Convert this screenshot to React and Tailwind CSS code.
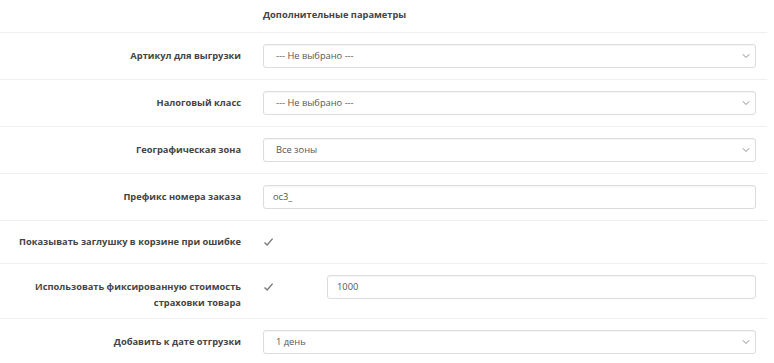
import React from "react";

const Chevron = () => (
  <svg width="8" height="5" viewBox="0 0 8 5" className="absolute right-[5px] top-1/2 -translate-y-1/2">
    <path d="M0.8 0.8 L4 4 L7.2 0.8" fill="none" stroke="#8a8a8a" strokeWidth="1" />
  </svg>
);

const Check = () => (
  <svg width="11" height="10" viewBox="0 0 11 10">
    <path d="M1.5 5.4 L4.2 8 L9.6 1.6" fill="none" stroke="#7a7a7a" strokeWidth="1.4" />
  </svg>
);

const Select = ({ value }) => (
  <div className="relative h-[24px] w-[493px] rounded-[3px] border border-[#dcdcdc] bg-white shadow-[inset_0_1px_1px_rgba(0,0,0,0.04)] flex items-center pl-[12px] text-[9.3px] text-[#555]">
    {value}
    <Chevron />
  </div>
);

const Input = ({ value, w = "w-[493px]" }) => (
  <div className={`h-[24px] ${w} rounded-[3px] border border-[#dcdcdc] bg-white shadow-[inset_0_1px_1px_rgba(0,0,0,0.04)] flex items-center pl-[9px] text-[9.3px] text-[#555]`}>
    {value}
  </div>
);

const Row = ({ label, children }) => (
  <div className="flex items-center border-t border-[#f0f0f0] py-[11px]">
    <div className="w-[241px] text-right font-bold text-[9.3px] leading-[16px] text-[#444]">{label}</div>
    <div className="ml-[22px]">{children}</div>
  </div>
);

export default function App() {
  return (
    <div className="w-[774px] h-[363px] overflow-hidden bg-white" style={{ fontFamily: '"Open Sans", "Noto Sans", sans-serif' }}>
      <div className="w-[767px]">
        <div className="h-[32px] flex items-center pl-[263px] pb-[2px] font-bold text-[9.3px] text-[#444]">
          Дополнительные параметры
        </div>
        <Row label="Артикул для выгрузки"><Select value="--- Не выбрано ---" /></Row>
        <Row label="Налоговый класс"><Select value="--- Не выбрано ---" /></Row>
        <Row label="Географическая зона"><Select value="Все зоны" /></Row>
        <Row label="Префикс номера заказа"><Input value="oc3_" /></Row>
        <div className="flex items-center border-t border-[#f0f0f0] h-[43px]">
          <div className="w-[241px] text-right font-bold text-[9.3px] leading-[20px] text-[#444] whitespace-nowrap">Показывать заглушку в корзине при ошибке</div>
          <div className="ml-[22px] flex items-center"><Check /></div>
        </div>
        <div className="flex items-start border-t border-[#f0f0f0] pt-[11px] pb-[7px]">
          <div className="w-[241px] pt-[4px] text-right font-bold text-[9.3px] leading-[16px] text-[#444]">
            Использовать фиксированную стоимость<br />страховки товара
          </div>
          <div className="ml-[22px] h-[24px] flex items-center w-[64px]"><Check /></div>
          <Input value="1000" w="w-[429px]" />
        </div>
        <Row label="Добавить к дате отгрузки"><Select value="1 день" /></Row>
      </div>
    </div>
  );
}
